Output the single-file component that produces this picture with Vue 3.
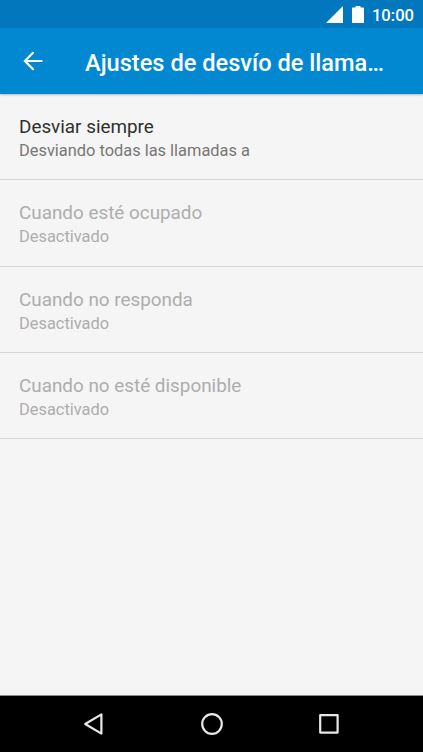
<script setup>
const rows = [
  { title: 'Desviar siempre', detail: 'Desviando todas las llamadas a', enabled: true },
  { title: 'Cuando esté ocupado', detail: 'Desactivado', enabled: false },
  { title: 'Cuando no responda', detail: 'Desactivado', enabled: false },
  { title: 'Cuando no esté disponible', detail: 'Desactivado', enabled: false },
]
</script>

<template>
  <div class="screen">
    <div class="status">
      <svg class="signal" width="17" height="17" viewBox="0 0 17 17"><path d="M17 0V17H0Z" fill="#fff" /></svg>
      <svg class="battery" width="12" height="17" viewBox="0 0 12 17"><path d="M3.5 0H8.5V1.5H11.4Q12 1.5 12 2.1V16.4Q12 17 11.4 17H.6Q0 17 0 16.4V2.1Q0 1.5 .6 1.5H3.5Z" fill="#fff" /></svg>
      <span class="clock">10:00</span>
    </div>
    <header class="bar">
      <svg class="back" width="20" height="20" viewBox="0 0 20 20"><path d="M18.6 10H2.2M10 1.8L1.9 10L10 18.2" fill="none" stroke="#fff" stroke-width="2.2" stroke-linecap="round" /></svg>
      <h1 class="heading">Ajustes de desvío de llama…</h1>
    </header>
    <main class="list">
      <div v-for="row in rows" :key="row.title" class="row" :class="{ disabled: !row.enabled }">
        <div class="title">{{ row.title }}</div>
        <div class="detail">{{ row.detail }}</div>
      </div>
    </main>
    <nav class="nav">
      <svg width="22" height="24" viewBox="0 0 22 24"><path d="M18.4 2.4V21.6L2.2 12Z" fill="none" stroke="#e8e8e8" stroke-width="2.2" stroke-linejoin="round" /></svg>
      <svg width="22" height="24" viewBox="0 0 22 24"><circle cx="11" cy="12" r="9.8" fill="none" stroke="#e8e8e8" stroke-width="2.2" /></svg>
      <svg width="22" height="24" viewBox="0 0 22 24"><rect x="2.2" y="3.2" width="17.4" height="17.4" fill="none" stroke="#e8e8e8" stroke-width="2.2" stroke-linejoin="round" /></svg>
    </nav>
  </div>
</template>

<style>
body { background: #f5f5f5; }
</style>

<style scoped>
.screen { width: 423px; height: 752px; display: flex; flex-direction: column; background: #f5f5f5; font-family: Roboto, sans-serif; overflow: hidden; }
.status { height: 28px; flex: none; display: flex; align-items: flex-end; justify-content: flex-end; background: #0277bd; padding: 0 9px 5px 0; box-sizing: border-box; }
.battery { margin-left: 9px; }
.clock { margin: 0 0 -1px 8px; color: #fff; font-size: 16.6px; font-weight: 500; line-height: 17px; }
.bar { height: 66px; flex: none; display: flex; align-items: center; background: #0288d1; padding: 0 30px 0 23px; box-shadow: 0 1px 2px rgba(0,0,0,.25); }
.back { flex: none; }
.heading { margin: 0 0 0 42px; padding-top: 4px; color: #fff; font-size: 23.62px; font-weight: 500; line-height: 32px; white-space: nowrap; }
.list { flex: 1; }
.row { box-sizing: border-box; height: 86.25px; padding: 21px 19px 0; border-bottom: 1px solid #d6d6d6; color: #303030; }
.title { font-size: 18.87px; line-height: 24px; }
.detail { font-size: 16.4px; line-height: 24px; color: #777; }
.disabled .title, .disabled .detail { color: #adadad; }
.nav { height: 57px; flex: none; box-sizing: border-box; border-top: 1px solid #8a8a8a; background: #000; display: flex; align-items: center; justify-content: center; gap: 95.3px; }
</style>
